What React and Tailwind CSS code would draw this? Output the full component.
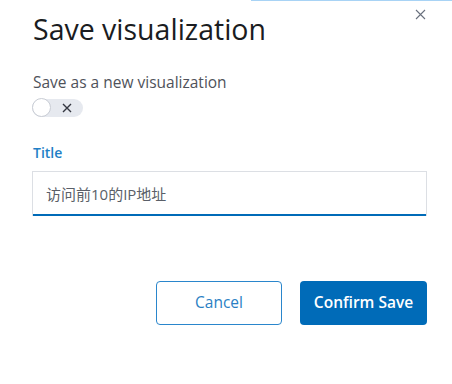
import React from 'react';

const App = () => {
    const [isNew, setIsNew] = React.useState(false);
    const [title, setTitle] = React.useState('访问前10的IP地址');

    return (
        <div className="relative w-[452px] h-[384px] bg-white overflow-hidden font-['Open_Sans','Noto_Sans_CJK_SC',sans-serif]">
            {/* focus ring edge from the page behind */}
            <div className="absolute top-0 left-[251px] right-0 h-px bg-[#a8d3f5]" />

            <button className="absolute top-[8px] left-[414px] w-[12px] h-[12px] flex items-center justify-center text-[#69707d]">
                <svg width="11" height="11" viewBox="0 0 11 11" fill="none" stroke="currentColor" strokeWidth="1.1">
                    <path d="M1 1l9 9M10 1l-9 9" />
                </svg>
            </button>

            <div className="pl-[32px] pr-[25px] pt-[11px]">
                <h1 className="text-[28.5px] leading-[37px] text-[#1a1c21] font-normal pl-px">Save visualization</h1>

                <div className="mt-[24px]">
                    <label className="block text-[15.5px] leading-[20px] text-[#4f525a] pl-px">Save as a new visualization</label>
                    <button
                        onClick={() => setIsNew(!isNew)}
                        className="mt-[7px] relative w-[51px] h-[18px] rounded-full bg-[#e6e9ef] flex items-center"
                    >
                        <span className="absolute left-0 top-[-1px] w-[19px] h-[19px] rounded-full bg-white border border-[#c8ccd4]" />
                        <svg className="absolute left-[30px] top-[4px]" width="10" height="10" viewBox="0 0 10 10" fill="none" stroke="#343741" strokeWidth="1.4">
                            <path d="M1 1l8 8M9 1l-8 8" />
                        </svg>
                    </button>
                </div>

                <div className="mt-[26px]">
                    <label className="block text-[14px] leading-[20px] font-semibold text-[#1f7fc6] pl-px">Title</label>
                    <div className="mt-[8px] w-[395px] h-[45px] bg-white border border-[#dcdfe4] border-b-0 shadow-[inset_0_-2px_0_#006bb8] flex items-center">
                        <input
                            value={title}
                            onChange={(e) => setTitle(e.target.value)}
                            className="w-full h-full px-[13px] pb-[2px] text-[15px] text-[#5a5f68] outline-none bg-transparent"
                        />
                    </div>
                </div>

                <div className="mt-[65px] flex justify-end gap-[18px] pr-0 w-[395px]">
                    <button className="w-[126px] h-[44px] rounded-[4px] border border-[#2a86cc] text-[#2a7fc4] text-[15.5px]">
                        Cancel
                    </button>
                    <button className="w-[127px] h-[44px] rounded-[4px] bg-[#006bb8] text-white text-[15.5px] font-semibold">
                        Confirm Save
                    </button>
                </div>
            </div>
        </div>
    );
};

export default App;
